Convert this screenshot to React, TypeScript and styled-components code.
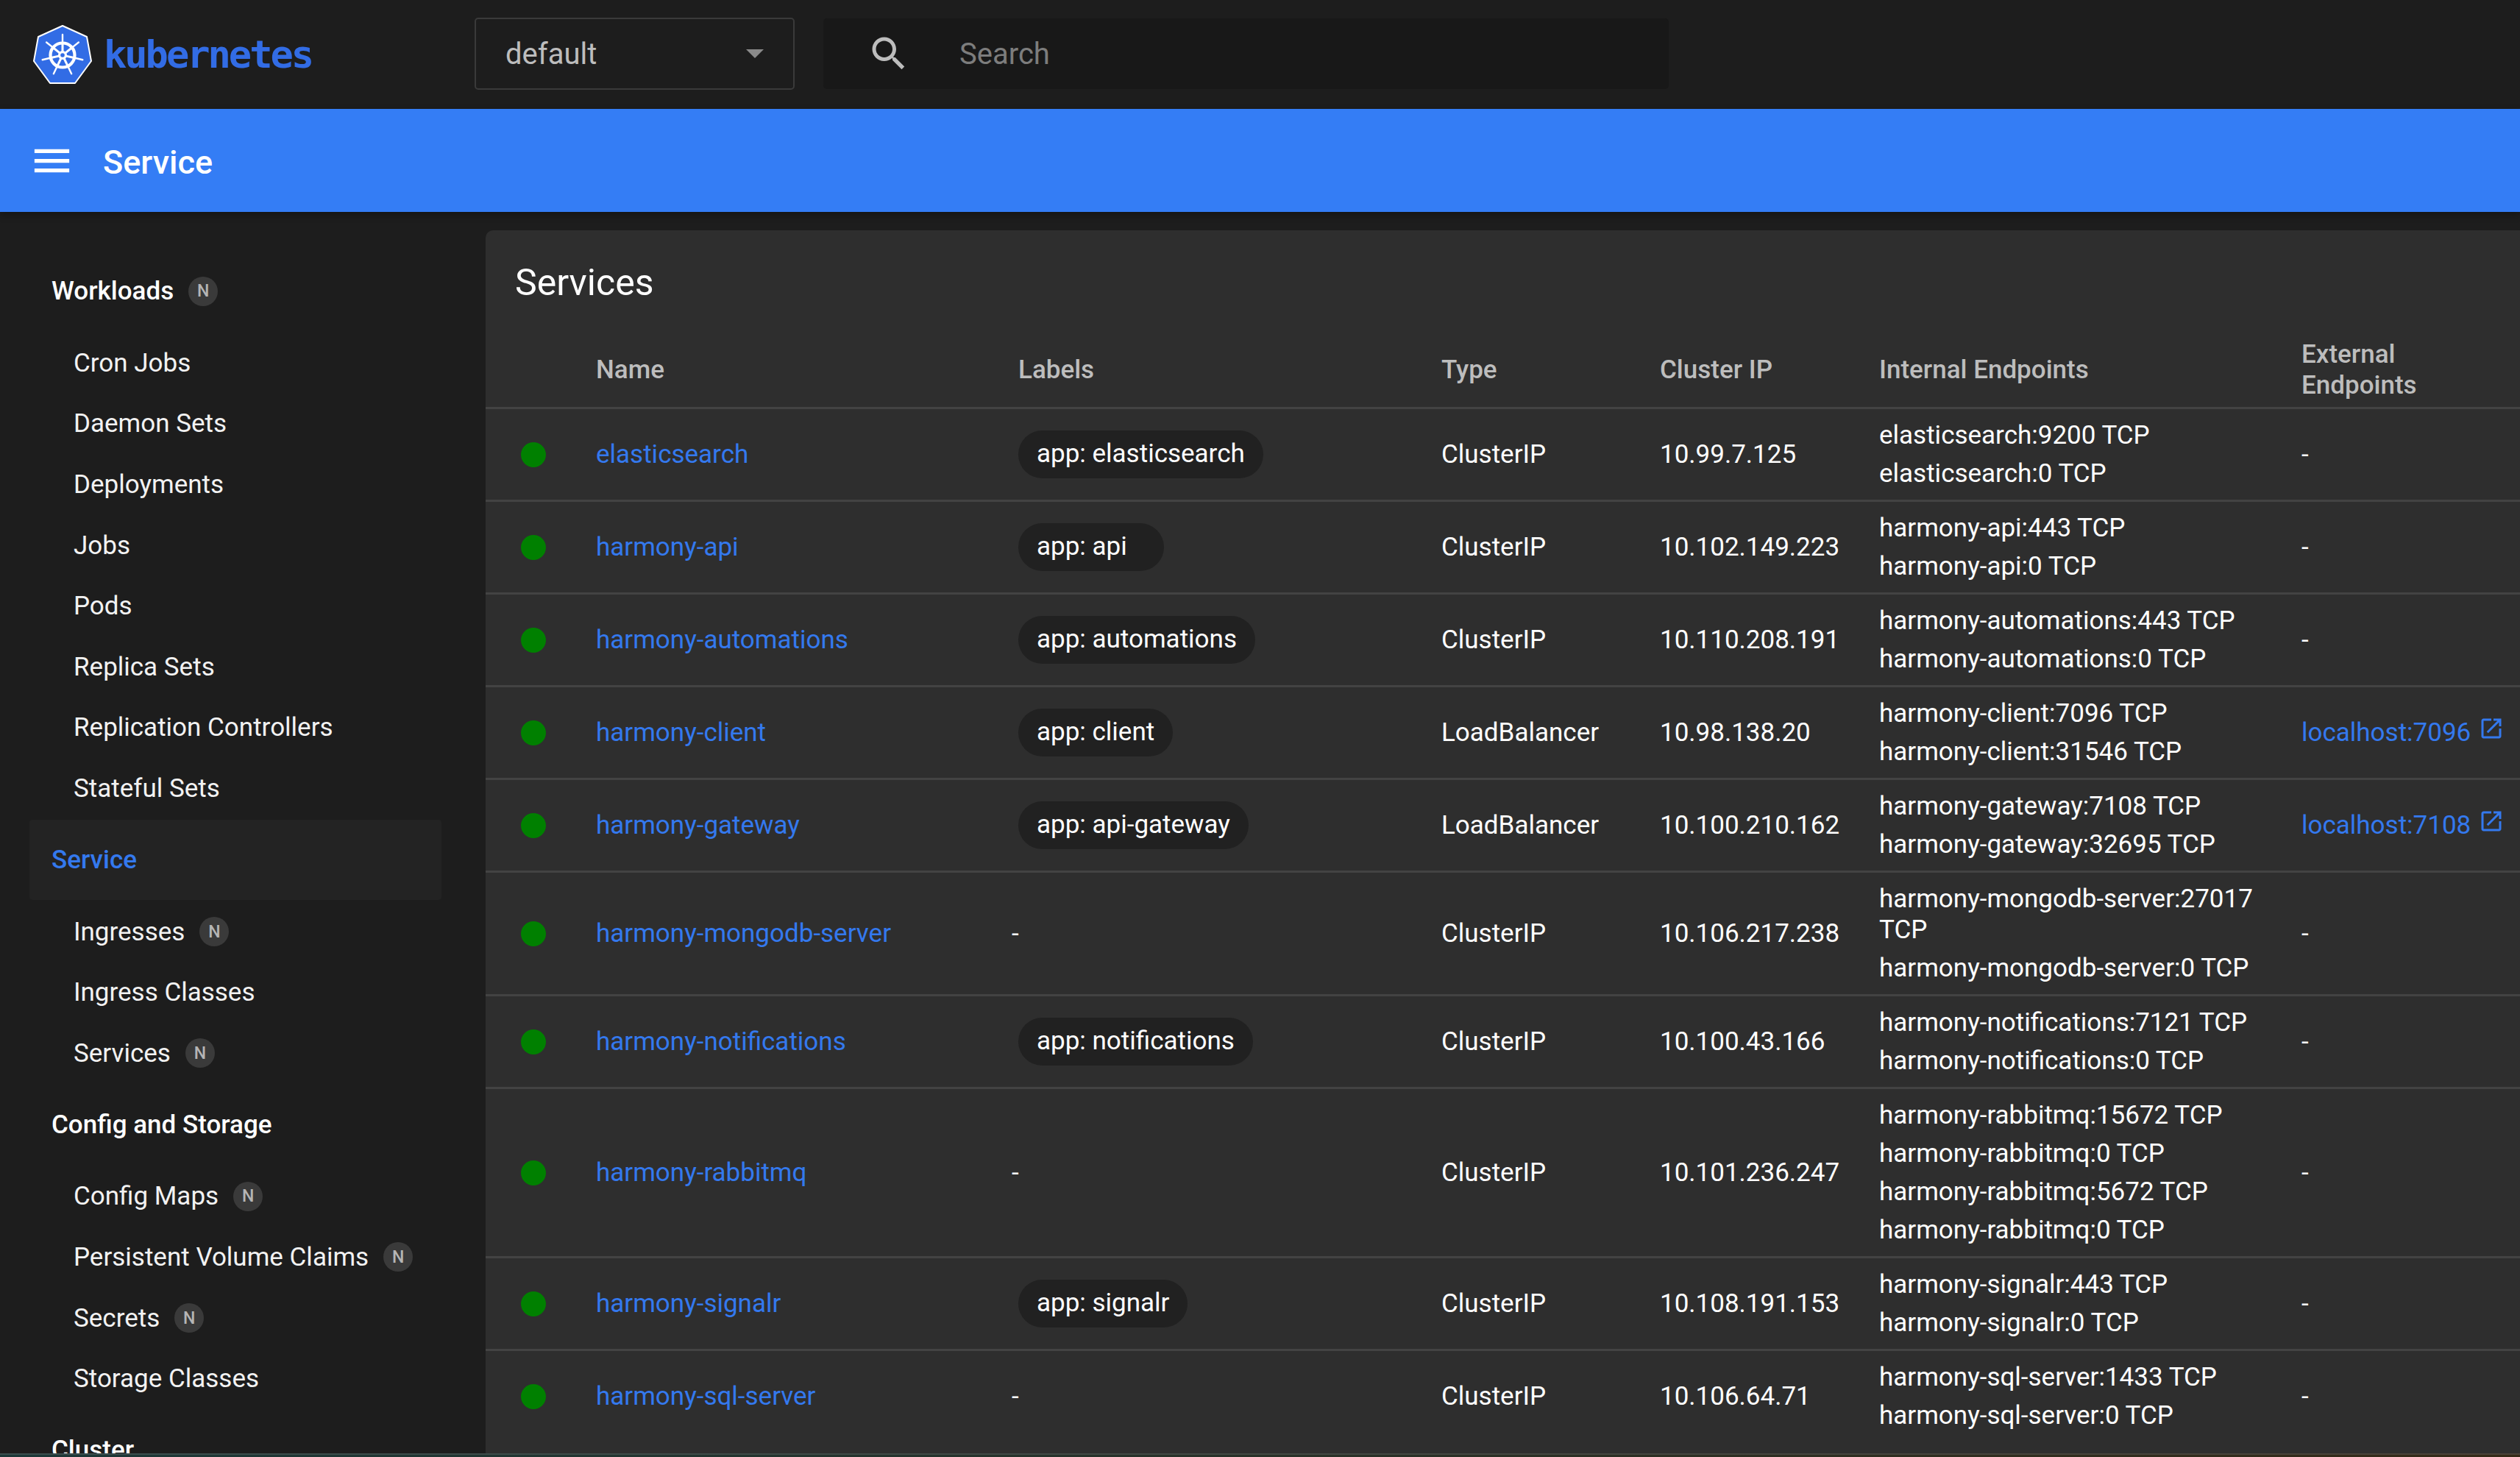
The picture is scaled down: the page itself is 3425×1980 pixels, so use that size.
import React from 'react';
import styled, { createGlobalStyle } from 'styled-components';

const GlobalStyle = createGlobalStyle`
    html, body {
        margin: 0;
        height: 100%;
        background: #1d1d1d;
        overflow: hidden;
    }
    * {
        box-sizing: border-box;
    }
`;

const Page = styled.div`
    display: flex;
    flex-direction: column;
    height: 1980px;
    overflow: hidden;
    background: #1d1d1d;
    font-family: Roboto, "Liberation Sans", sans-serif;
    font-size: 35px;
    color: #fff;
`;
const TopBar = styled.header`
    display: flex;
    align-items: center;
    flex: 0 0 148px;
    padding-left: 45px;
`;
const Brand = styled.div`
    display: flex;
    align-items: center;
    gap: 16px;
    width: 600px;
`;
const BrandName = styled.span`
    font-family: "DejaVu Sans Mono", monospace;
    font-weight: 700;
    font-size: 52px;
    letter-spacing: -3px;
    color: #326ce5;
`;
const NamespaceSelect = styled.div`
    display: flex;
    align-items: center;
    justify-content: space-between;
    width: 435px;
    height: 98px;
    margin-bottom: 2px;
    padding: 0 40px;
    border: 2px solid #3a3a3a;
    border-radius: 5px;
    font-size: 40px;
    color: #bdbdbd;
`;
const Caret = styled.span`
    width: 0;
    height: 0;
    border-left: 12px solid transparent;
    border-right: 12px solid transparent;
    border-top: 12px solid #8a8a8a;
`;
const SearchBox = styled.div`
    display: flex;
    align-items: center;
    width: 1149px;
    height: 96px;
    margin-left: 39px;
    margin-bottom: 2px;
    padding-left: 59px;
    gap: 66px;
    background: #181818;
    border-radius: 5px;
    font-size: 40px;
    color: #7d7d7d;
`;
const ActionBar = styled.div`
    display: flex;
    align-items: center;
    flex: 0 0 140px;
    padding-left: 39px;
    gap: 38px;
    background: #347df5;
    box-shadow: 0 4px 10px rgba(0, 0, 0, 0.3);
    position: relative;
`;
const ActionTitle = styled.h1`
    margin: 0;
    padding-top: 4px;
    font-size: 45px;
    font-weight: 500;
    color: #fff;
`;
const Body = styled.div`
    display: flex;
    flex: 1;
    min-height: 0;
    overflow: hidden;
`;
const Sidebar = styled.nav`
    flex: 0 0 660px;
    padding: 52px 60px 0 40px;
    overflow: hidden;
`;
const SectionLink = styled.div<{ $active?: boolean }>`
    display: flex;
    align-items: center;
    gap: 20px;
    height: 109px;
    margin: 1px 0 2px;
    padding-left: 30px;
    border-radius: 4px;
    font-weight: 500;
    color: ${(p) => (p.$active ? '#3479ee' : '#fff')};
    background: ${(p) => (p.$active ? '#232323' : 'transparent')};
`;
const ItemLink = styled.div`
    display: flex;
    align-items: center;
    gap: 20px;
    height: 82.6px;
    padding-left: 60px;
    color: #f2f2f2;
`;
const NewBadge = styled.span`
    display: inline-flex;
    align-items: center;
    justify-content: center;
    width: 40px;
    height: 40px;
    border-radius: 50%;
    background: #3a3a3a;
    font-size: 23px;
    font-weight: 500;
    color: #b5b5b5;
`;
const Card = styled.main`
    flex: 1;
    min-width: 0;
    margin-top: 25px;
    background: #2e2e2e;
    border-top-left-radius: 10px;
`;
const CardTitle = styled.h2`
    display: flex;
    align-items: center;
    height: 137px;
    margin: 0;
    padding: 4px 0 0 40px;
    font-size: 50px;
    font-weight: 400;
`;
const Table = styled.table`
    width: 100%;
    table-layout: fixed;
    border-collapse: collapse;
    tbody tr:last-child td {
        border-bottom: none;
    }
`;
const HeadCell = styled.th`
    height: 104px;
    padding: 4px 48px 0 0;
    border-bottom: 3px solid #434343;
    text-align: left;
    font-size: 35px;
    font-weight: 500;
    line-height: 42px;
    color: #bdbdbd;
`;
const Cell = styled.td`
    padding: 10px 48px 9px 0;
    border-bottom: 3px solid #434343;
    vertical-align: middle;
    overflow-wrap: break-word;
`;
const StatusCell = styled(Cell)`
    padding: 2px 0 0 48px;
`;
const Dot = styled.span`
    display: block;
    width: 34px;
    height: 34px;
    border-radius: 50%;
    background: #008000;
`;
const ServiceLink = styled.a`
    color: #3479ee;
    text-decoration: none;
`;
const LabelChip = styled.span`
    display: inline-block;
    min-width: 198px;
    height: 65px;
    padding: 0 25px;
    border-radius: 33px;
    background: #212121;
    line-height: 63px;
    white-space: nowrap;
`;
const NoLabel = styled.span`
    margin-left: -9px;
`;
const Endpoint = styled.div`
    padding: 5px 0;
    line-height: 42px;
`;
const ExternalLink = styled.a`
    display: inline-flex;
    align-items: flex-start;
    gap: 10px;
    color: #3479ee;
    text-decoration: none;
    white-space: nowrap;
    svg {
        margin-top: -3px;
    }
`;
// thin strip of the desktop behind the window, along the bottom edge
const BottomEdge = styled.div`
    flex: 0 0 5px;
    background:
        linear-gradient(90deg, #3a4e4e, #4a4238) 0 0 / 100% 2px no-repeat,
        linear-gradient(90deg, #1c3838, #352a18);
`;

const columns = [150, 574, 575, 297, 298, 574, 297];

type Service = {
    name: string;
    label?: string;
    type: string;
    ip: string;
    endpoints: string[];
    external?: string;
};

const services: Service[] = [
    { name: 'elasticsearch', label: 'app: elasticsearch', type: 'ClusterIP', ip: '10.99.7.125', endpoints: ['elasticsearch:9200 TCP', 'elasticsearch:0 TCP'] },
    { name: 'harmony-api', label: 'app: api', type: 'ClusterIP', ip: '10.102.149.223', endpoints: ['harmony-api:443 TCP', 'harmony-api:0 TCP'] },
    { name: 'harmony-automations', label: 'app: automations', type: 'ClusterIP', ip: '10.110.208.191', endpoints: ['harmony-automations:443 TCP', 'harmony-automations:0 TCP'] },
    { name: 'harmony-client', label: 'app: client', type: 'LoadBalancer', ip: '10.98.138.20', endpoints: ['harmony-client:7096 TCP', 'harmony-client:31546 TCP'], external: 'localhost:7096' },
    { name: 'harmony-gateway', label: 'app: api-gateway', type: 'LoadBalancer', ip: '10.100.210.162', endpoints: ['harmony-gateway:7108 TCP', 'harmony-gateway:32695 TCP'], external: 'localhost:7108' },
    { name: 'harmony-mongodb-server', type: 'ClusterIP', ip: '10.106.217.238', endpoints: ['harmony-mongodb-server:27017 TCP', 'harmony-mongodb-server:0 TCP'] },
    { name: 'harmony-notifications', label: 'app: notifications', type: 'ClusterIP', ip: '10.100.43.166', endpoints: ['harmony-notifications:7121 TCP', 'harmony-notifications:0 TCP'] },
    { name: 'harmony-rabbitmq', type: 'ClusterIP', ip: '10.101.236.247', endpoints: ['harmony-rabbitmq:15672 TCP', 'harmony-rabbitmq:0 TCP', 'harmony-rabbitmq:5672 TCP', 'harmony-rabbitmq:0 TCP'] },
    { name: 'harmony-signalr', label: 'app: signalr', type: 'ClusterIP', ip: '10.108.191.153', endpoints: ['harmony-signalr:443 TCP', 'harmony-signalr:0 TCP'] },
    { name: 'harmony-sql-server', type: 'ClusterIP', ip: '10.106.64.71', endpoints: ['harmony-sql-server:1433 TCP', 'harmony-sql-server:0 TCP'] },
];

type NavEntry = { text: string; section?: boolean; active?: boolean; badge?: boolean };

const nav: NavEntry[] = [
    { text: 'Workloads', section: true, badge: true },
    { text: 'Cron Jobs' },
    { text: 'Daemon Sets' },
    { text: 'Deployments' },
    { text: 'Jobs' },
    { text: 'Pods' },
    { text: 'Replica Sets' },
    { text: 'Replication Controllers' },
    { text: 'Stateful Sets' },
    { text: 'Service', section: true, active: true },
    { text: 'Ingresses', badge: true },
    { text: 'Ingress Classes' },
    { text: 'Services', badge: true },
    { text: 'Config and Storage', section: true },
    { text: 'Config Maps', badge: true },
    { text: 'Persistent Volume Claims', badge: true },
    { text: 'Secrets', badge: true },
    { text: 'Storage Classes' },
    { text: 'Cluster', section: true },
];

const KubeLogo = () => {
    const spokes = [0, 1, 2, 3, 4, 5, 6].map((i) => (i * 360) / 7);
    return (
        <svg width="80" height="80" viewBox="0 0 80 80">
            <path
                d="M40 1 L73 16 L79 49 L57 79 L23 79 L1 49 L7 16 Z"
                fill="#326ce5"
                stroke="#fff"
                strokeWidth="2"
                strokeLinejoin="round"
            />
            <circle cx="40" cy="41" r="16.5" fill="none" stroke="#fff" strokeWidth="4.2" />
            {spokes.map((angle) => (
                <g key={angle} transform={`rotate(${angle} 40 41)`}>
                    <line x1="40" y1="36" x2="40" y2="25" stroke="#fff" strokeWidth="3" />
                    <line x1="40" y1="24" x2="40" y2="13" stroke="#fff" strokeWidth="2.4" strokeLinecap="round" />
                </g>
            ))}
            <circle cx="40" cy="41" r="6" fill="#fff" />
            <circle cx="40" cy="41" r="2.8" fill="#326ce5" />
        </svg>
    );
};

const MenuIcon = () => (
    <svg width="63" height="63" viewBox="0 0 24 24" fill="#fff">
        <path d="M3 18h18v-2H3v2zm0-5h18v-2H3v2zm0-7v2h18V6H3z" />
    </svg>
);

const SearchIcon = () => (
    <svg width="60" height="60" viewBox="0 0 24 24" fill="#bdbdbd">
        <path d="M15.5 14h-.79l-.28-.27C15.41 12.59 16 11.11 16 9.5 16 5.91 13.09 3 9.5 3S3 5.91 3 9.5 5.91 16 9.5 16c1.61 0 3.09-.59 4.23-1.57l.27.28v.79l5 4.99L20.49 19l-4.99-5zm-6 0C7.01 14 5 11.99 5 9.5S7.01 5 9.5 5 14 7.01 14 9.5 11.99 14 9.5 14z" />
    </svg>
);

const OpenIcon = () => (
    <svg width="36" height="36" viewBox="0 0 24 24" fill="#3479ee">
        <path d="M19 19H5V5h7V3H5c-1.11 0-2 .9-2 2v14c0 1.1.89 2 2 2h14c1.1 0 2-.9 2-2v-7h-2v7zM14 3v2h3.59l-9.83 9.83 1.41 1.41L19 6.41V10h2V3h-7z" />
    </svg>
);

const App = () => (
    <Page>
        <GlobalStyle />
        <TopBar>
            <Brand>
                <KubeLogo />
                <BrandName>kubernetes</BrandName>
            </Brand>
            <NamespaceSelect>
                default
                <Caret />
            </NamespaceSelect>
            <SearchBox>
                <SearchIcon />
                Search
            </SearchBox>
        </TopBar>
        <ActionBar>
            <MenuIcon />
            <ActionTitle>Service</ActionTitle>
        </ActionBar>
        <Body>
            <Sidebar>
                {nav.map((entry) =>
                    entry.section ? (
                        <SectionLink key={entry.text} $active={entry.active}>
                            {entry.text}
                            {entry.badge && <NewBadge>N</NewBadge>}
                        </SectionLink>
                    ) : (
                        <ItemLink key={entry.text}>
                            {entry.text}
                            {entry.badge && <NewBadge>N</NewBadge>}
                        </ItemLink>
                    )
                )}
            </Sidebar>
            <Card>
                <CardTitle>Services</CardTitle>
                <Table>
                    <colgroup>
                        {columns.map((width, i) => (
                            <col key={i} width={width} />
                        ))}
                    </colgroup>
                    <thead>
                        <tr>
                            <HeadCell />
                            <HeadCell>Name</HeadCell>
                            <HeadCell>Labels</HeadCell>
                            <HeadCell>Type</HeadCell>
                            <HeadCell>Cluster IP</HeadCell>
                            <HeadCell>Internal Endpoints</HeadCell>
                            <HeadCell>External Endpoints</HeadCell>
                        </tr>
                    </thead>
                    <tbody>
                        {services.map((service) => (
                            <tr key={service.name}>
                                <StatusCell>
                                    <Dot />
                                </StatusCell>
                                <Cell>
                                    <ServiceLink href="#">{service.name}</ServiceLink>
                                </Cell>
                                <Cell>{service.label ? <LabelChip>{service.label}</LabelChip> : <NoLabel>-</NoLabel>}</Cell>
                                <Cell>{service.type}</Cell>
                                <Cell>{service.ip}</Cell>
                                <Cell>
                                    {service.endpoints.map((endpoint, i) => (
                                        <Endpoint key={i}>{endpoint}</Endpoint>
                                    ))}
                                </Cell>
                                <Cell>
                                    {service.external ? (
                                        <ExternalLink href="#">
                                            {service.external}
                                            <OpenIcon />
                                        </ExternalLink>
                                    ) : (
                                        '-'
                                    )}
                                </Cell>
                            </tr>
                        ))}
                    </tbody>
                </Table>
            </Card>
        </Body>
        <BottomEdge />
    </Page>
);

export default App;
